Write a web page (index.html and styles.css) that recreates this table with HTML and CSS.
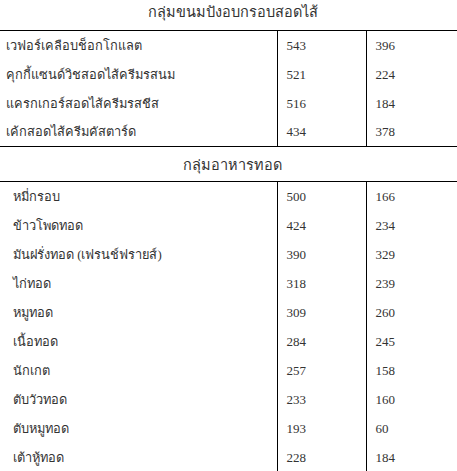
FILE: index.html
```html
<!DOCTYPE html>
<html lang="th">
<head>
<meta charset="utf-8">
<title>ตารางพลังงาน</title>
<link rel="stylesheet" href="styles.css">
</head>
<body>
<table class="tbl">
  <colgroup>
    <col class="c-name">
    <col class="c-num">
    <col class="c-num2">
  </colgroup>
  <tbody>
    <tr class="group first-group"><th colspan="3">กลุ่มขนมปังอบกรอบสอดไส้</th></tr>
    <tr class="row g1 top"><td class="name">เวฟอร์เคลือบช็อกโกแลต</td><td class="num">543</td><td class="num">396</td></tr>
    <tr class="row g1"><td class="name">คุกกี้แซนด์วิชสอดไส้ครีมรสนม</td><td class="num">521</td><td class="num">224</td></tr>
    <tr class="row g1"><td class="name">แครกเกอร์สอดไส้ครีมรสชีส</td><td class="num">516</td><td class="num">184</td></tr>
    <tr class="row g1 bottom"><td class="name">เค้กสอดไส้ครีมคัสตาร์ด</td><td class="num">434</td><td class="num">378</td></tr>
    <tr class="group"><th colspan="3">กลุ่มอาหารทอด</th></tr>
    <tr class="row g2 top"><td class="name">หมี่กรอบ</td><td class="num">500</td><td class="num">166</td></tr>
    <tr class="row g2"><td class="name">ข้าวโพดทอด</td><td class="num">424</td><td class="num">234</td></tr>
    <tr class="row g2"><td class="name">มันฝรั่งทอด (เฟรนช์ฟรายส์)</td><td class="num">390</td><td class="num">329</td></tr>
    <tr class="row g2"><td class="name">ไก่ทอด</td><td class="num">318</td><td class="num">239</td></tr>
    <tr class="row g2"><td class="name">หมูทอด</td><td class="num">309</td><td class="num">260</td></tr>
    <tr class="row g2"><td class="name">เนื้อทอด</td><td class="num">284</td><td class="num">245</td></tr>
    <tr class="row g2"><td class="name">นักเกต</td><td class="num">257</td><td class="num">158</td></tr>
    <tr class="row g2"><td class="name">ตับวัวทอด</td><td class="num">233</td><td class="num">160</td></tr>
    <tr class="row g2"><td class="name">ตับหมูทอด</td><td class="num">193</td><td class="num">60</td></tr>
    <tr class="row g2"><td class="name">เต้าหู้ทอด</td><td class="num">228</td><td class="num">184</td></tr>
  </tbody>
</table>
</body>
</html>
```
FILE: styles.css
```css
html, body {
  margin: 0;
  padding: 0;
  background: #fff;
}
body {
  font-family: "Liberation Serif", "Times New Roman", serif;
  font-size: 13px;
  color: #333;
}
.tbl {
  width: 457px;
  border-collapse: collapse;
  table-layout: fixed;
}
.tbl th,
.tbl td {
  box-sizing: border-box;
  line-height: 16px;
}
.c-name { width: 277px; }
.c-num { width: 89px; }
.c-num2 { width: 91px; }

.group th {
  font-weight: normal;
  font-size: 14.5px;
  text-align: center;
  height: 35px;
  padding: 2px 0 0 8px;
  border-bottom: 1px solid #000;
}
.first-group th {
  height: 30px;
  padding: 0 0 5px 8px;
}
.row td {
  height: 29px;
  padding: 2px 0 0 0;
  vertical-align: middle;
}
.row .num {
  padding-left: 9px;
  border-left: 1px solid #000;
}
.row .name {
  font-size: 12.8px;
  padding-left: 6px;
}
.g2 .name {
  padding-left: 13px;
}
.row.bottom td {
  border-bottom: 1px solid #000;
}
```
